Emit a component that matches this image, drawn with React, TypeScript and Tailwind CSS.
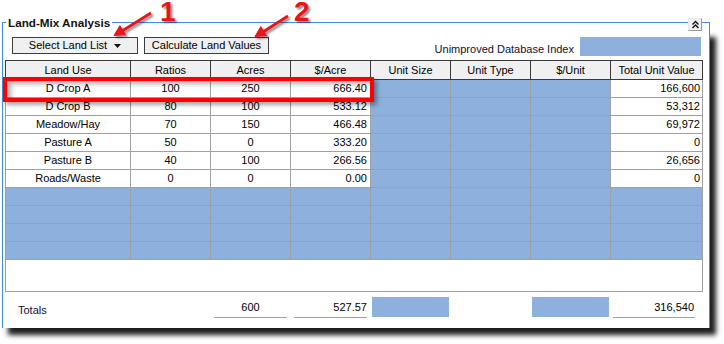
import React from 'react';

const blue = 'bg-[#8db0dd]';

const rows = [
  ['D Crop A', '100', '250', '666.40', '166,600'],
  ['D Crop B', '80', '100', '533.12', '53,312'],
  ['Meadow/Hay', '70', '150', '466.48', '69,972'],
  ['Pasture A', '50', '0', '333.20', '0'],
  ['Pasture B', '40', '100', '266.56', '26,656'],
  ['Roads/Waste', '0', '0', '0.00', '0'],
];

const headers = ['Land Use', 'Ratios', 'Acres', '$/Acre', 'Unit Size', 'Unit Type', '$/Unit', 'Total Unit Value'];
const widths = ['w-[125px]', 'w-[80px]', 'w-[80px]', 'w-[80px]', 'w-[80px]', 'w-[80px]', 'w-[80px]', 'w-[91px]'];

const ChevronsUp = () => (
  <svg width="9" height="9" viewBox="0 0 9 9" fill="none" stroke="#111" strokeWidth="1.4">
    <polyline points="1.5,4.5 4.5,1.5 7.5,4.5" />
    <polyline points="1.5,8 4.5,5 7.5,8" />
  </svg>
);

const Arrows = () => (
  <svg className="absolute left-0 top-0 pointer-events-none" width="724" height="60">
    <defs>
      <filter id="sh" x="-20%" y="-20%" width="160%" height="160%">
        <feDropShadow dx="2" dy="2" stdDeviation="1.3" floodColor="#000" floodOpacity="0.45" />
      </filter>
    </defs>
    <g filter="url(#sh)" fill="#e8141b" stroke="#e8141b">
      <line x1="151" y1="13" x2="122" y2="31" strokeWidth="3" />
      <polygon points="114,35.5 125.5,34.6 119.9,25.6" strokeWidth="1" />
      <line x1="288" y1="16" x2="263" y2="32" strokeWidth="3" />
      <polygon points="255,36.5 266.5,35.5 260.8,26.6" strokeWidth="1" />
    </g>
  </svg>
);

export default function App() {
  return (
    <div className="relative w-[724px] h-[344px] bg-white overflow-hidden text-black text-[11px] font-['Liberation_Sans',Arial,sans-serif]">
      <div className="pt-[16px] pl-[2px]">
        <div className="w-[708px]">
          {/* group box top edge */}
          <div className="flex h-[14px]">
            <div className="w-[4px] mt-[6px] border-t border-l border-[#3d8fe6]" />
            <div className="px-[2px] leading-[13px] font-bold text-[11.7px] text-[#111]">Land-Mix Analysis</div>
            <div className="flex-1 h-px mt-[6px] bg-[#3d8fe6]" />
            <button className="mt-[2px] w-[14px] h-[13px] flex items-center justify-center bg-[#f0f0f0] border border-t-[#e8e8e8] border-l-[#e8e8e8] border-r-[#9a9a9a] border-b-[#9a9a9a]">
              <ChevronsUp />
            </button>
            <div className="w-[8px] mt-[6px] border-t border-r border-[#3d8fe6]" />
          </div>

          {/* group box body */}
          <div className="border-x border-[#3d8fe6] pt-[7px] pb-[10px] shadow-[6px_7px_5px_rgba(0,0,0,0.88)]">
            <div className="flex items-start h-[19px] pl-[9px] pr-[8px]">
              <button className="w-[126px] h-[17px] flex items-center justify-center gap-[7px] bg-[#f0f0f0] border border-[#3c3c3c] leading-none">
                <span>Select Land List</span>
                <svg width="7" height="4" viewBox="0 0 7 4">
                  <polygon points="0,0 7,0 3.5,4" fill="#111" />
                </svg>
              </button>
              <button className="ml-[6px] w-[125px] h-[17px] flex items-center justify-center bg-[#f0f0f0] border border-[#3c3c3c] leading-none">
                Calculate Land Values
              </button>
              <span className="ml-auto self-end leading-[13px] text-[#101030]">Unimproved Database Index</span>
              <div className={`ml-[6px] w-[121px] h-[19px] ${blue}`} />
            </div>

            {/* grid */}
            <div className="ml-[2px] mt-[4px] w-[698px]">
              <div className="flex border border-[#3a3a3a] bg-[#f0f0f0] h-[20px]">
                {headers.map((h, i) => (
                  <div
                    key={h}
                    className={`${widths[i]} flex items-center justify-center leading-none ${i < 7 ? 'border-r border-[#3a3a3a]' : ''}`}
                  >
                    {h}
                  </div>
                ))}
              </div>
              {rows.map((r) => (
                <div key={r[0]} className="flex h-[18px] border-x border-b border-[#a0a0a0]">
                  <div className="w-[125px] border-r border-[#a0a0a0] flex items-center justify-center bg-white">{r[0]}</div>
                  <div className="w-[80px] border-r border-[#a0a0a0] flex items-center justify-center bg-white">{r[1]}</div>
                  <div className="w-[80px] border-r border-[#a0a0a0] flex items-center justify-center bg-white">{r[2]}</div>
                  <div className="w-[80px] border-r border-[#a0a0a0] flex items-center justify-end pr-[3px] bg-white">{r[3]}</div>
                  <div className={`w-[80px] border-r border-[#a0a0a0] ${blue}`} />
                  <div className={`w-[80px] border-r border-[#a0a0a0] ${blue}`} />
                  <div className={`w-[80px] border-r border-[#a0a0a0] ${blue}`} />
                  <div className="w-[91px] flex items-center justify-end pr-[2px] bg-white">{r[4]}</div>
                </div>
              ))}
              {[0, 1, 2, 3].map((k) => (
                <div key={k} className="flex h-[18px] border-x border-b border-[#a0a0a0]">
                  {widths.map((w, i) => (
                    <div key={i} className={`${w} ${blue} ${i < 7 ? 'border-r border-[#a0a0a0]' : ''}`} />
                  ))}
                </div>
              ))}
              <div className="h-[32px] border-x border-b border-[#a0a0a0]" />
            </div>

            {/* totals */}
            <div className="ml-[2px] mt-[5px] flex h-[21px]">
              <div className="w-[125px] pl-[13px] pt-[7px] leading-[13px] text-[#101030]">Totals</div>
              <div className="w-[80px]" />
              <div className="w-[80px] pl-[4px] pr-[3px]">
                <div className="h-full border-b border-[#a0a0a0] text-center leading-[20px]">600</div>
              </div>
              <div className="w-[80px] pl-[4px] pr-[3px]">
                <div className="h-full border-b border-[#a0a0a0] text-right leading-[20px]">527.57</div>
              </div>
              <div className="w-[80px] pl-[2px] pr-[1px]">
                <div className={`h-[20px] ${blue}`} />
              </div>
              <div className="w-[80px]" />
              <div className="w-[80px] pl-[2px] pr-[1px]">
                <div className={`h-[20px] ${blue}`} />
              </div>
              <div className="w-[91px] pl-[3px] pr-[6px]">
                <div className="h-full border-b border-[#a0a0a0] text-right leading-[20px] pr-[1px]">316,540</div>
              </div>
            </div>
          </div>
        </div>
      </div>

      {/* annotations */}
      <div className="absolute left-[3px] top-[77px] w-[371px] h-[25px] border-4 border-[#ff0000] shadow-[3px_3px_4px_rgba(0,0,0,0.35),inset_4px_3px_5px_rgba(0,0,0,0.3)] pointer-events-none" />
      <Arrows />
      <span className="absolute left-[160px] top-0 text-[28px] leading-[24px] font-bold text-[#e8141b] [text-shadow:2px_2px_2px_rgba(0,0,0,0.45)]">1</span>
      <span className="absolute left-[294px] top-0 text-[28px] leading-[24px] font-bold text-[#e8141b] [text-shadow:2px_2px_2px_rgba(0,0,0,0.45)]">2</span>
    </div>
  );
}
